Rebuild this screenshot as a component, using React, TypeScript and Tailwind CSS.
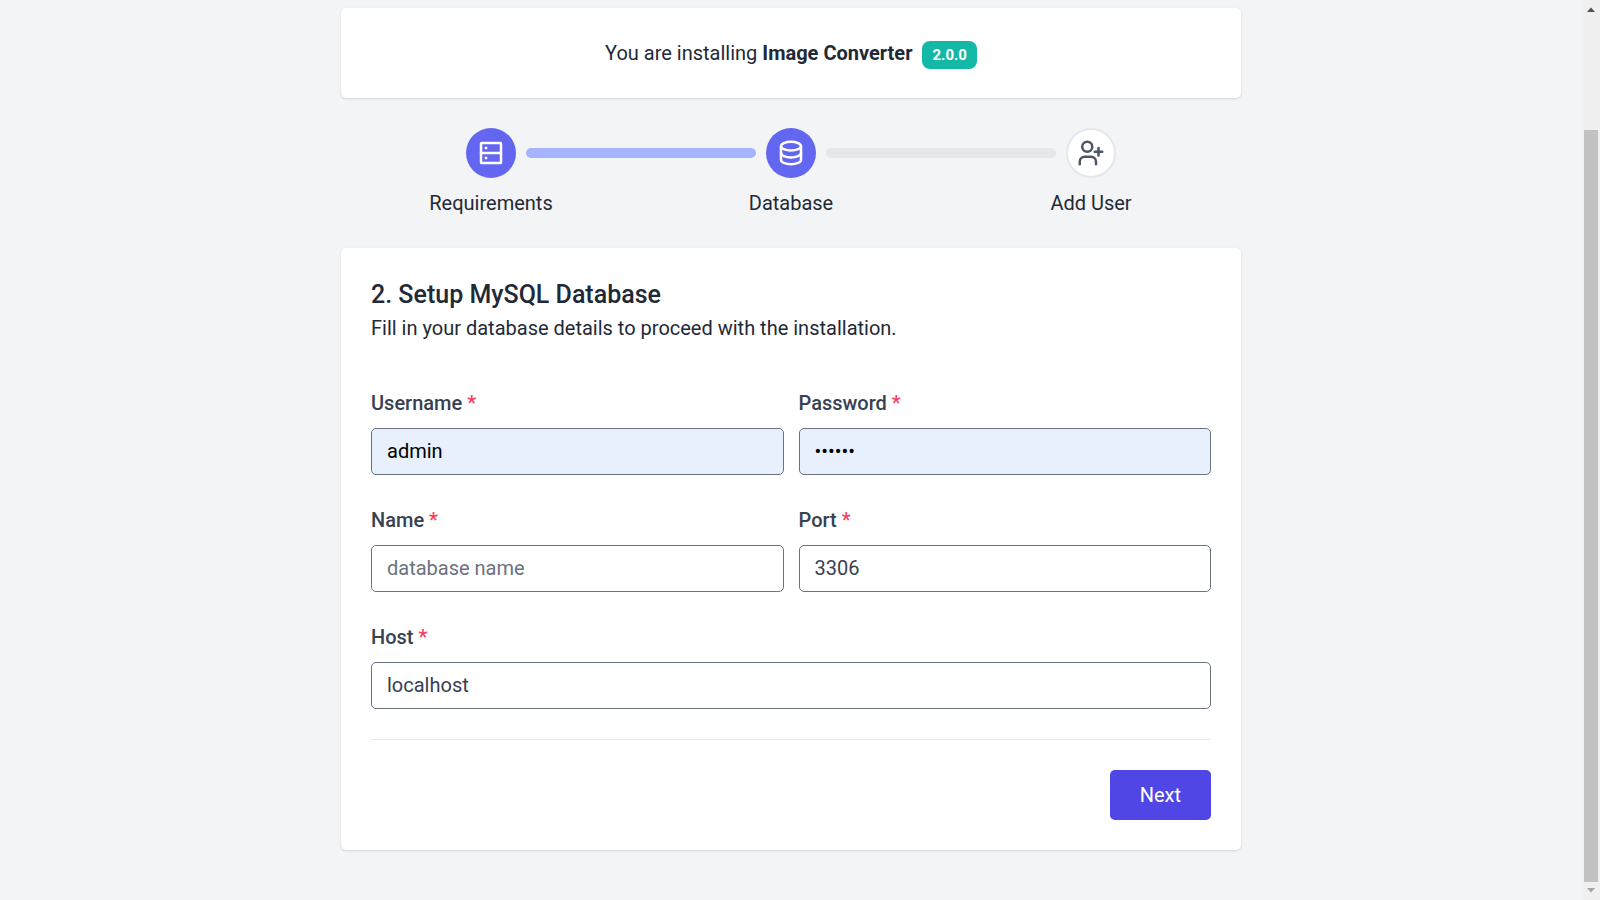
import { clsx } from 'clsx'
import type { InputHTMLAttributes, ReactNode } from 'react'

type StepState = 'done' | 'current' | 'upcoming'

function Icon({ children }: { children: ReactNode }) {
  return (
    <svg
      viewBox="0 0 24 24"
      className="size-[30px]"
      fill="none"
      stroke="currentColor"
      strokeWidth="2"
      strokeLinecap="round"
      strokeLinejoin="round"
      aria-hidden="true"
    >
      {children}
    </svg>
  )
}

function ServerIcon() {
  return (
    <Icon>
      <rect x="4" y="4" width="16" height="16" rx="0.5" />
      <path d="M4 12h16" />
      <path d="M7 7h2v2H7zM7 15h2v2H7z" fill="currentColor" stroke="none" />
    </Icon>
  )
}

function DatabaseIcon() {
  return (
    <Icon>
      <ellipse cx="12" cy="6.5" rx="8" ry="3.5" />
      <path d="M4 6.500V12a8 3.500 0 0 0 16 0V6.500" />
      <path d="M4 12v5.500a8 3.500 0 0 0 16 0V12" />
    </Icon>
  )
}

function UserPlusIcon() {
  return (
    <Icon>
      <circle cx="9" cy="7" r="4" />
      <path d="M3 21v-2a4 4 0 0 1 4-4h5a4 4 0 0 1 4 4v2" />
      <path d="M15 11h6m-3-3v6" />
    </Icon>
  )
}

function StepCircle({ state, children }: { state: StepState; children: ReactNode }) {
  return (
    <div
      className={clsx(
        'flex size-[50px] shrink-0 items-center justify-center rounded-full',
        state === 'upcoming'
          ? 'border-2 border-[#e5e7eb] bg-white text-[#4b5563]'
          : 'bg-[#6366f1] text-white'
      )}
    >
      {children}
    </div>
  )
}

function Connector({ done = false }: { done?: boolean }) {
  return (
    <div className={clsx('h-2.5 flex-1 rounded-full', done ? 'bg-[#a5b4fc]' : 'bg-[#e5e7eb]')} />
  )
}

/**
 * Progress through the three installer steps.
 */
function Stepper() {
  return (
    <div className="my-[30px]">
      <div className="flex items-center gap-2.5 px-[125px]">
        <StepCircle state="done">
          <ServerIcon />
        </StepCircle>
        <Connector done />
        <StepCircle state="current">
          <DatabaseIcon />
        </StepCircle>
        <Connector />
        <StepCircle state="upcoming">
          <UserPlusIcon />
        </StepCircle>
      </div>
      <ol className="mt-2.5 grid grid-cols-3 text-center">
        <li>Requirements</li>
        <li aria-current="step">Database</li>
        <li>Add User</li>
      </ol>
    </div>
  )
}

interface FieldProps extends InputHTMLAttributes<HTMLInputElement> {
  id: string
  label: string
  filled?: boolean
  wide?: boolean
}

function Field({ id, label, filled = false, wide = false, ...input }: FieldProps) {
  return (
    <div className={clsx(wide && 'col-span-2')}>
      <label htmlFor={id} className="mb-2.5 block font-medium text-[#374151]">
        {label} <span className="text-[#f43f5e]">*</span>
      </label>
      <input
        id={id}
        name={id}
        className={clsx(
          'block w-full rounded-[5px] border border-[#6b7280] px-[15px] py-2.5 leading-[25px] placeholder:text-[#6b7280]',
          filled ? 'bg-[#e8f0fe] text-black' : 'bg-white text-[#374151]'
        )}
        {...input}
      />
    </div>
  )
}

/** Vertical page scrollbar with its two arrow ends. */
function ScrollTrack() {
  return (
    <div className="flex h-screen w-[18px] shrink-0 flex-col items-center bg-[#f0f0f0]" aria-hidden="true">
      <svg viewBox="0 0 18 18" className="size-[18px] shrink-0" fill="#505050">
        <path d="M9 7.500l4 4.500H5z" />
      </svg>
      <div className="mt-28 w-3.5 flex-1 bg-[#c1c1c1]" />
      <svg viewBox="0 0 18 18" className="size-[18px] shrink-0" fill="#a3a3a3">
        <path d="M9 10.500L5 6h8z" />
      </svg>
    </div>
  )
}

export default function App() {
  return (
    <div className="flex min-h-screen bg-[#f3f4f6] font-[Roboto,sans-serif] text-[20px] leading-[30px] text-[#1f2937]">
      <main className="flex-1 pt-2">
        <div className="mx-auto w-full max-w-[900px]">
          <header className="rounded-[5px] bg-white p-[30px] text-center shadow-sm">
            <p>
              You are installing <strong className="font-bold">Image Converter</strong>{' '}
              <span className="ml-[5px] rounded-lg bg-[#14b8a6] px-2.5 py-[5px] text-[15px] leading-5 font-bold text-white">
                2.0.0
              </span>
            </p>
          </header>

          <Stepper />

          <form className="rounded-[5px] bg-white p-[30px] shadow-sm" onSubmit={(e) => e.preventDefault()}>
            <h1 className="mb-0.5 text-[25px] leading-[33px] font-medium">2. Setup MySQL Database</h1>
            <p>Fill in your database details to proceed with the installation.</p>

            <div className="mt-[45px] grid grid-cols-2 gap-x-[15px] gap-y-[30px]">
              <Field id="username" label="Username" defaultValue="admin" filled />
              <Field id="password" label="Password" type="password" defaultValue="secret" filled />
              <Field id="name" label="Name" placeholder="database name" />
              <Field id="port" label="Port" defaultValue="3306" />
              <Field id="host" label="Host" defaultValue="localhost" wide />
            </div>

            <div className="mt-[30px] flex justify-end border-t border-[#e5e7eb] pt-[30px]">
              <button type="submit" className="rounded-[5px] bg-[#4f46e5] px-[30px] py-2.5 text-white">
                Next
              </button>
            </div>
          </form>
        </div>
      </main>
      <ScrollTrack />
    </div>
  )
}
